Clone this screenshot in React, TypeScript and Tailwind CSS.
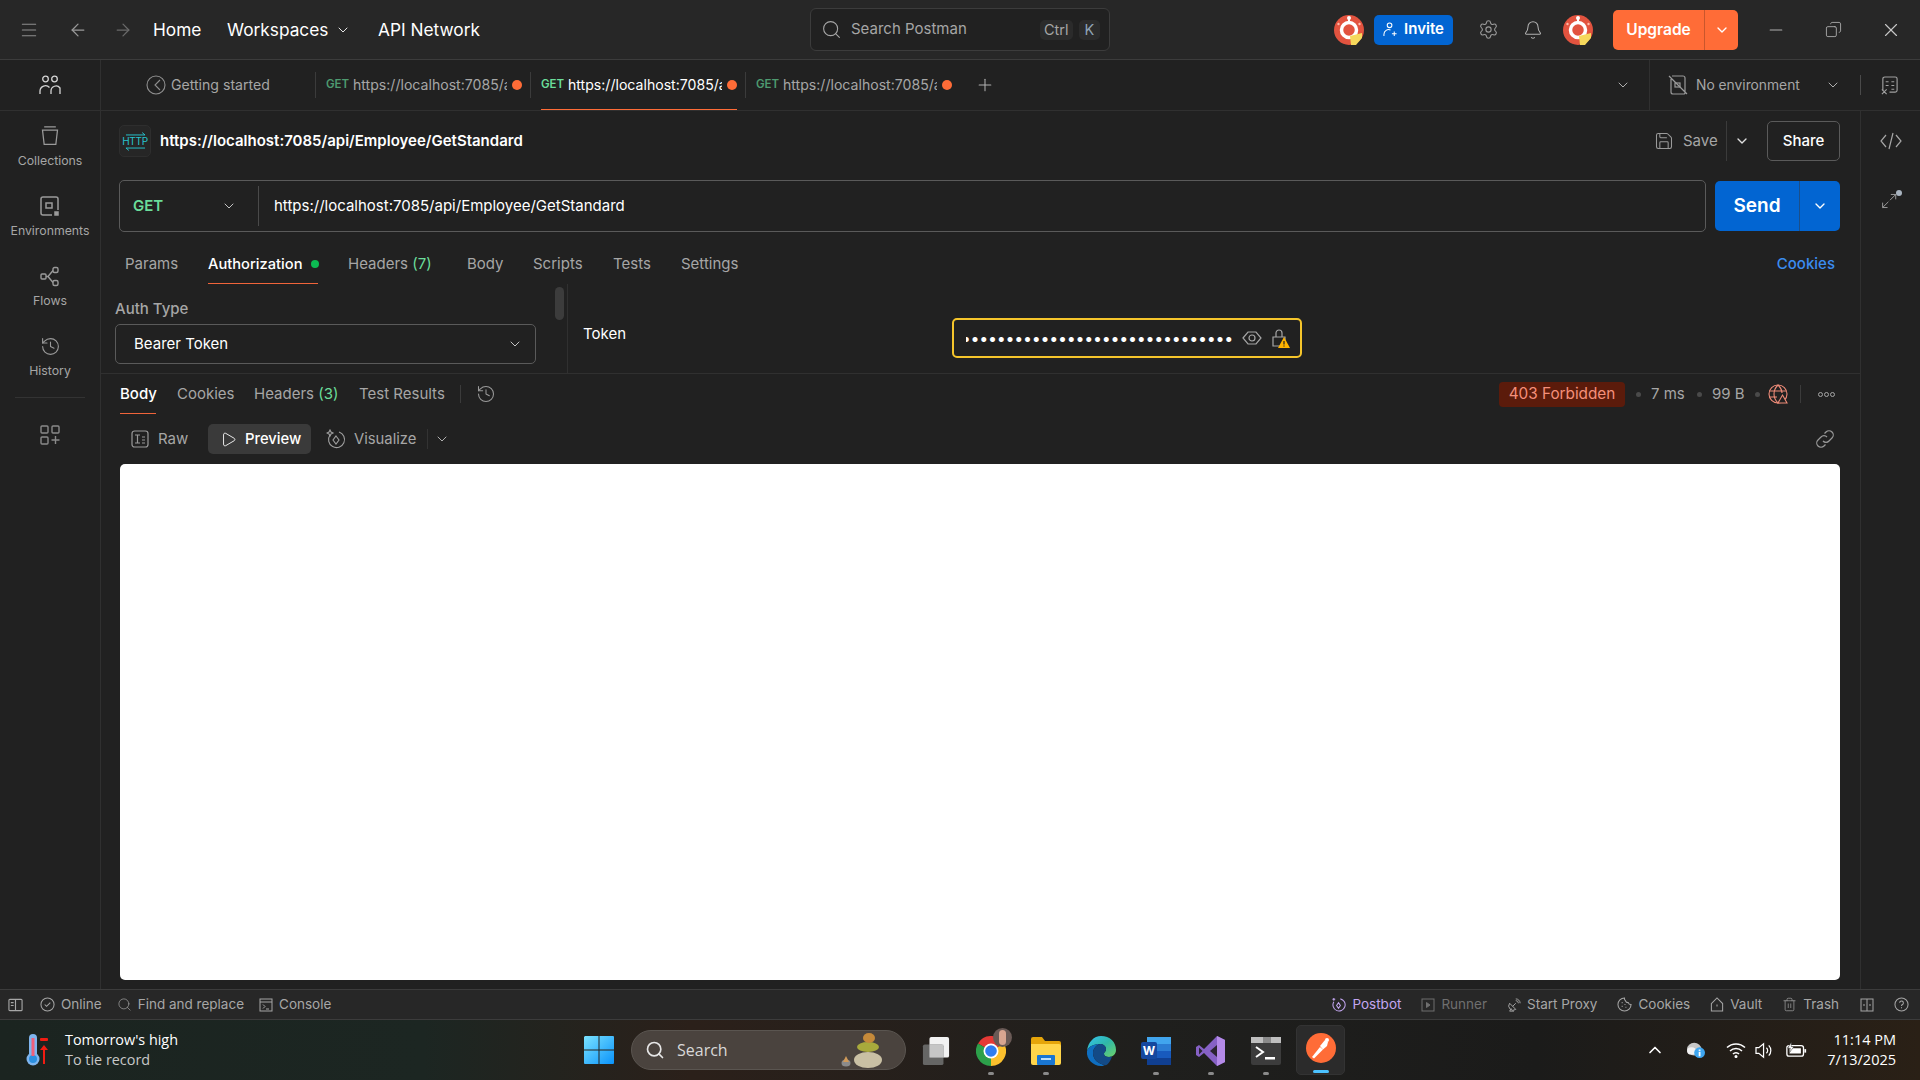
import {
  ArrowLeft,
  ArrowRight,
  Bell,
  ChevronDown,
  ChevronUp,
  Copy,
  History,
  Menu,
  Minus,
  Play,
  Plus,
  Save,
  Search,
  Settings,
  Trash2,
  X,
} from "lucide-react";

const Chev = ({ className = "text-[#c4c4c4]", size = 16 }: { className?: string; size?: number }) => (
  <ChevronDown size={size} strokeWidth={1.5} className={`shrink-0 ${className}`} />
);

const Avatar = ({ className = "" }: { className?: string }) => (
  <svg viewBox="0 0 30 30" className={`h-[30px] w-[30px] shrink-0 ${className}`}>
    <circle cx="15" cy="15" r="15" fill="#e2533f" />
    <circle cx="15" cy="3" r="2" fill="#fff" />
    <rect x="14" y="3" width="2" height="4" fill="#fff" />
    <circle cx="4.500" cy="9" r="1.200" fill="#ffb9a8" />
    <circle cx="25.500" cy="9" r="1.200" fill="#ffb9a8" />
    <circle cx="15" cy="15" r="7.500" fill="none" stroke="#fff" strokeWidth="3.500" />
    <path d="M16 21l12-3v5l-6 7h-5z" fill="#f6d85c" />
  </svg>
);

const PostmanLogo = () => (
  <svg viewBox="0 0 30 30" className="h-[30px] w-[30px]">
    <circle cx="15" cy="15" r="15" fill="#ff6c37" />
    <path d="M6 24l8-10 3 2.500-9 9z" fill="#fff" />
    <path d="M14 13l5-6 3 2-1 4-4 3.500z" fill="#fff" />
    <circle cx="21" cy="7" r="2" fill="#fff" />
  </svg>
);

const LeftIcon = ({ children, label }: { children: React.ReactNode; label: string }) => (
  <div className="flex h-[70px] w-full flex-col items-center pt-[2px] text-[#a6a6a6]">
    <div className="flex h-[26px] items-center text-[#9a9a9a]">{children}</div>
    <span className="mt-[3px] text-[12.3px] leading-[18px]">{label}</span>
  </div>
);

const Line = ({ className }: { className: string }) => <div className={`w-px shrink-0 bg-[#3b3b3b] ${className}`} />;

const Dot = () => <div className="size-[10px] shrink-0 rounded-full bg-[#ff6c37]" />;

const Tab = ({ active = false }: { active?: boolean }) => (
  <div className={`flex h-[50px] items-center ${active ? "border-b border-[#ff6c37]" : ""}`}>
    <span className={`w-[27px] shrink-0 text-[11.5px] font-semibold ${active ? "text-[#6bdd9a]" : "text-[#4e9a70]"}`}>GET</span>
    <span className={`w-[154px] shrink-0 overflow-hidden whitespace-nowrap text-[14.1px] ${active ? "text-white" : "text-[#a6a6a6]"}`}>
      https://localhost:7085/api/Employee/GetStandard
    </span>
    <span className="ml-[5px]">
      <Dot />
    </span>
  </div>
);

const TopBar = () => (
  <div className="flex h-[60px] shrink-0 items-center border-b border-[#3c3c3c] bg-[#272727]">
    <div className="flex w-[810px] items-center">
      <Menu size={20} strokeWidth={1.25} className="ml-[19px] text-[#8f8f8f]" />
      <ArrowLeft size={20} strokeWidth={1.5} className="ml-[29px] text-[#9a9a9a]" />
      <ArrowRight size={20} strokeWidth={1.5} className="ml-[25px] text-[#6a6a6a]" />
      <span className="ml-[20px] w-[49px] text-[17.3px] text-white">Home</span>
      <span className="ml-[25px] w-[101px] text-[17.3px] text-white">Workspaces</span>
      <Chev className="ml-[7px] text-[#e6e6e6]" />
      <span className="ml-[27px] text-[17.3px] text-white">API Network</span>
    </div>
    <div className="flex h-[43px] w-[300px] items-center rounded-md border border-[#3c3c3c] bg-[#212121]">
      <Search size={21} strokeWidth={1.25} className="ml-[10px] text-[#a6a6a6]" />
      <span className="ml-[9px] w-[189px] whitespace-nowrap text-[15px] text-[#a6a6a6]">Search Postman</span>
      <span className="rounded-[5px] bg-[#2b2b2b] px-[4px] py-[1px] text-[14.5px] leading-[18px] text-[#a6a6a6]">Ctrl</span>
      <span className="ml-[6px] rounded-[5px] bg-[#2b2b2b] px-[6px] py-[1px] text-[14.5px] leading-[18px] text-[#8fa3b5]">K</span>
    </div>
    <div className="flex flex-1 items-center">
      <Avatar className="ml-[224px]" />
      <div className="ml-[10px] flex h-[30px] w-[79px] items-center justify-center gap-[6px] rounded-[5px] bg-[#0265d2] text-[15px] font-semibold text-white">
        <svg viewBox="0 0 16 16" className="h-[15px] w-[15px]" fill="none" stroke="currentColor" strokeWidth="1.100">
          <circle cx="7" cy="3.500" r="2.500" />
          <path d="M1 15v-2a5 5 0 0 1 7-4.500M12 10v5M9.500 12.500h5" />
        </svg>
        Invite
      </div>
      <Settings size={21} strokeWidth={1.25} className="ml-[25px] text-[#9a9a9a]" />
      <Bell size={20} strokeWidth={1.25} className="ml-[24px] text-[#b0b0b0]" />
      <Avatar className="ml-[20px]" />
      <div className="ml-[20px] flex h-[40px] w-[125px] items-center rounded-[5px] bg-[#ff6c37] text-[15.5px] font-semibold text-white">
        <span className="w-[91px] text-center">Upgrade</span>
        <div className="flex h-full flex-1 items-center justify-center border-l border-[#c9562c]">
          <ChevronDown size={16} strokeWidth={2} />
        </div>
      </div>
      <Minus size={20} strokeWidth={1.25} className="ml-[28px] text-[#b0b0b0]" />
      <Copy size={17} strokeWidth={1.25} className="ml-[39px] -scale-x-100 text-[#b0b0b0]" />
      <X size={22} strokeWidth={1.25} className="ml-[38px] text-[#c8c8c8]" />
    </div>
  </div>
);

const Sidebar = () => (
  <div className="flex w-[101px] shrink-0 flex-col items-center border-r border-[#303030]">
    <div className="flex h-[51px] w-full items-center justify-center border-b border-[#303030] text-[#d4d4d4]">
      <svg viewBox="0 0 22 20" className="h-[20px] w-[22px]" fill="none" stroke="currentColor" strokeWidth="1.300">
        <circle cx="6.500" cy="4" r="2.800" />
        <circle cx="15.500" cy="4" r="2.800" />
        <path d="M1 19v-3a5.500 5.500 0 0 1 9.500-3.500M12 19v-3a5 5 0 0 1 9-3v6" />
      </svg>
    </div>
    <div className="flex w-full flex-col pt-[10px]">
      <LeftIcon label="Collections">
        <svg viewBox="0 0 20 24" className="h-[20px] w-[18px]" fill="none" stroke="currentColor" strokeWidth="1.500">
          <path d="M3 1h14M1 5h18l-2 17H3z" />
        </svg>
      </LeftIcon>
      <LeftIcon label="Environments">
        <svg viewBox="0 0 20 20" className="h-[20px] w-[20px]" fill="none" stroke="currentColor" strokeWidth="1.500">
          <path d="M12 19H3a2 2 0 0 1-2-2V3a2 2 0 0 1 2-2h13a2 2 0 0 1 2 2v11" />
          <rect x="6" y="7" width="6" height="5" />
          <rect x="15" y="16" width="3" height="3" fill="currentColor" />
        </svg>
      </LeftIcon>
      <LeftIcon label="Flows">
        <svg viewBox="0 0 20 20" className="h-[21px] w-[20px]" fill="none" stroke="currentColor" strokeWidth="1.400">
          <rect x="1" y="7.500" width="5" height="5" rx="1" />
          <rect x="13" y="1" width="5" height="5" rx="1.500" />
          <rect x="13" y="14" width="5" height="5" rx="1.500" />
          <path d="M6 10h2l5-6M8 10l5 6" />
        </svg>
      </LeftIcon>
      <LeftIcon label="History">
        <History size={21} strokeWidth={1.25} />
      </LeftIcon>
    </div>
    <div className="-mt-[4px] h-px w-[70px] bg-[#333333]" />
    <div className="mt-[27px] text-[#8a8a8a]">
      <svg viewBox="0 0 20 20" className="h-[20px] w-[20px]" fill="none" stroke="currentColor" strokeWidth="1.400">
        <rect x="1" y="1" width="7" height="7" rx="1" />
        <rect x="12" y="1" width="7" height="7" rx="1" />
        <rect x="1" y="12" width="7" height="7" rx="1" />
        <path d="M15.500 11v8M11.500 15h8" />
      </svg>
    </div>
  </div>
);

const TabRow = () => (
  <div className="flex h-[51px] shrink-0 items-center border-b border-[#303030]">
    <svg viewBox="0 0 20 20" className="ml-[45px] h-[20px] w-[20px] shrink-0 text-[#8f8f8f]" fill="none" stroke="currentColor" strokeWidth="1.100">
      <circle cx="10" cy="10" r="9" />
      <path d="M14 5l-5 5 5 5" />
    </svg>
    <span className="ml-[5px] w-[98px] shrink-0 whitespace-nowrap text-[14.1px] text-[#a6a6a6]">Getting started</span>
    <Line className="ml-[46px] h-[26px]" />
    <div className="ml-[10px]">
      <Tab />
    </div>
    <Line className="ml-[8px] h-[26px]" />
    <div className="ml-[10px]">
      <Tab active />
    </div>
    <Line className="ml-[8px] h-[26px]" />
    <div className="ml-[10px]">
      <Tab />
    </div>
    <Plus size={20} strokeWidth={1.25} className="ml-[23px] shrink-0 text-[#b0b0b0]" />
    <Chev className="ml-[620px] text-[#b0b0b0]" />
    <Line className="ml-[18px] h-[50px] bg-[#303030]" />
    <svg viewBox="0 0 20 20" className="ml-[18px] h-[20px] w-[20px] shrink-0 text-[#9a9a9a]" fill="none" stroke="currentColor" strokeWidth="1.200">
      <path d="M3 4v13a2 2 0 0 0 2 2h11a1.500 1.500 0 0 0 1-1V3a2 2 0 0 0-2-2H4M1 1l18 18" />
      <rect x="7" y="8" width="5" height="4" />
    </svg>
    <span className="ml-[8px] w-[104px] shrink-0 whitespace-nowrap text-[13.8px] text-[#a6a6a6]">No environment</span>
    <Chev className="ml-[25px] text-[#b0b0b0]" />
    <Line className="ml-[19px] h-[20px] bg-[#4a4a4a]" />
    <svg viewBox="0 0 20 20" className="ml-[19px] h-[19px] w-[19px] shrink-0 text-[#a0a0a0]" fill="none" stroke="currentColor" strokeWidth="1.200">
      <path d="M3 15V3a2 2 0 0 1 2-2h11a2 2 0 0 1 2 2v12a2 2 0 0 1-2 2h-6" />
      <path d="M6 6h3M12 6h3M6 10h3M12 10h3M12 14h3M2 14l5 5M7 14l-5 5" />
    </svg>
  </div>
);

const RequestHeader = () => (
  <div className="flex h-[69px] shrink-0 items-center pb-[9px] pl-[18px]">
    <div className="flex size-[32px] items-center justify-center rounded-[5px] border border-[#2e2e2e] bg-[#262626]">
      <div className="flex flex-col items-center text-[#28c4cf]">
        <svg viewBox="0 0 22 4" className="h-[4px] w-[21px]" fill="none" stroke="currentColor" strokeWidth="1">
          <path d="M1 3h20l-3-2.500" />
        </svg>
        <span className="text-[10px] leading-[11px] tracking-[-0.3px]">HTTP</span>
        <svg viewBox="0 0 22 4" className="h-[4px] w-[21px]" fill="none" stroke="currentColor" strokeWidth="1">
          <path d="M21 1H1l3 2.500" />
        </svg>
      </div>
    </div>
    <span className="ml-[9px] text-[15px] font-semibold text-white">https://localhost:7085/api/Employee/GetStandard</span>
    <div className="ml-auto flex items-center pr-[20px]">
      <Save size={20} strokeWidth={1.25} className="text-[#9a9a9a]" />
      <span className="ml-[9px] w-[35px] text-[15px] text-[#a6a6a6]">Save</span>
      <Line className="ml-[8px] h-[40px] bg-[#2a2a2a]" />
      <ChevronDown size={16} strokeWidth={2} className="ml-[7px] text-[#e0e0e0]" />
      <div className="ml-[17px] flex h-[40px] w-[73px] items-center justify-center rounded-[5px] border border-[#5a5a5a] text-[15px] font-medium text-white">
        Share
      </div>
    </div>
  </div>
);

const UrlBar = () => (
  <div className="flex h-[52px] shrink-0 pl-[18px] pr-[20px]">
    <div className="flex h-full flex-1 items-center rounded-[5px] border border-[#5a5a5a]">
      <span className="ml-[13px] w-[88px] text-[15px] font-semibold text-[#6bdd9a]">GET</span>
      <Chev className="text-[#c4c4c4]" />
      <Line className="ml-[21px] h-[40px] bg-[#4a4a4a]" />
      <span className="ml-[15px] text-[15px] text-white">https://localhost:7085/api/Employee/GetStandard</span>
    </div>
    <div className="ml-[9px] flex h-[50px] w-[125px] items-center self-center rounded-[5px] bg-[#0265d2] font-semibold text-white">
      <span className="w-[84px] text-center text-[19px]">Send</span>
      <div className="flex h-full flex-1 items-center justify-center border-l border-[#1b4f8a]">
        <ChevronDown size={16} strokeWidth={2} />
      </div>
    </div>
  </div>
);

const RequestTabs = () => (
  <div className="flex h-[52px] shrink-0 items-stretch whitespace-nowrap pl-[24px] pr-[25px] pt-[12px] text-[15px] text-[#a6a6a6]">
    <span className="flex w-[53px] items-center">Params</span>
    <div className="ml-[30px] flex w-[110px] items-center gap-[8px] border-b border-[#f0643a] pt-px text-[14.7px] font-medium text-white">
      Authorization
      <span className="size-[8px] shrink-0 rounded-full bg-[#0cbb52]" />
    </div>
    <span className="ml-[30px] flex w-[84px] items-center">
      Headers&nbsp;<span className="text-[#6bdd9a]">(7)</span>
    </span>
    <span className="ml-[35px] flex w-[36px] items-center">Body</span>
    <span className="ml-[30px] flex w-[49px] items-center">Scripts</span>
    <span className="ml-[31px] flex w-[38px] items-center">Tests</span>
    <span className="ml-[30px] flex w-[58px] items-center">Settings</span>
    <span className="ml-auto flex items-center font-medium text-[#3b8cf0]">Cookies</span>
  </div>
);

const AuthPanel = () => (
  <div className="flex h-[90px] shrink-0 border-b border-[#303030]">
    <div className="w-[454px] shrink-0 pl-[14px] pt-[16px]">
      <div className="text-[15px] font-medium leading-[18px] text-[#a6a6a6]">Auth Type</div>
      <div className="mt-[6px] flex h-[40px] w-[421px] items-center justify-between rounded-[5px] border border-[#5a5a5a] pl-[18px] pr-[12px] text-[15px] text-white">
        Bearer Token
        <Chev />
      </div>
    </div>
    <div className="mt-[3px] h-[33px] w-[9px] rounded-full bg-[#3c3c3c]" />
    <div className="ml-[3px] w-px bg-[#303030]" />
    <div className="flex flex-1 items-start pl-[15px]">
      <span className="mt-[39px] w-[369px] text-[15px] text-white">Token</span>
      <div className="mt-[34px] flex h-[40px] w-[350px] items-center rounded-[5px] border-2 border-[#f5c52b] pl-[12px]">
        <div className="flex w-[267px] justify-end overflow-hidden whitespace-nowrap text-[16px] leading-none tracking-[-0.25px] text-white">
          ••••••••••••••••••••••••••••••••••
        </div>
        <svg viewBox="0 0 20 14" className="ml-[9px] h-[14px] w-[20px] text-[#a6a6a6]" fill="none" stroke="currentColor" strokeWidth="1.200">
          <path d="M1 7l5-6h8l5 6-5 6H6z" />
          <circle cx="10" cy="7" r="3" />
        </svg>
        <div className="relative ml-[10px] h-[18px] w-[17px]">
          <svg viewBox="0 0 14 18" className="h-[18px] w-[14px] text-[#a6a6a6]" fill="none" stroke="currentColor" strokeWidth="1.200">
            <path d="M1 8h12v9H1zM4 8V4a3 3 0 0 1 6 0v4" />
          </svg>
          <svg viewBox="0 0 12 11" className="absolute -right-[1px] bottom-[-1px] h-[11px] w-[12px]">
            <path d="M6 0l6 11H0z" fill="#ffb400" />
            <path d="M6 4v3.500M6 8.600v1" stroke="#212121" strokeWidth="1.200" />
          </svg>
        </div>
      </div>
    </div>
  </div>
);

const ResponseTabs = () => (
  <div className="flex h-[40px] shrink-0 items-stretch whitespace-nowrap pl-[19px] pr-[25px] text-[15px] text-[#a6a6a6]">
    <div className="flex h-[40px] w-[36px] items-center border-b border-[#f0643a] pt-px font-medium text-white">Body</div>
    <span className="ml-[21px] flex w-[57px] items-center">Cookies</span>
    <span className="ml-[20px] flex w-[85px] items-center">
      Headers&nbsp;<span className="text-[#6bdd9a]">(3)</span>
    </span>
    <span className="ml-[20px] flex w-[86px] items-center">Test Results</span>
    <div className="ml-[15px] flex items-center">
      <Line className="h-[18px] bg-[#3b3b3b]" />
      <History size={20} strokeWidth={1.25} className="ml-[15px] text-[#9a9a9a]" />
    </div>
    <div className="ml-auto flex items-center">
      <span className="flex h-[25px] w-[126px] items-center justify-center rounded-[4px] bg-[#5b1b0b] text-[15.3px] text-[#f58f7a]">403 Forbidden</span>
      <span className="ml-[11px] size-[5px] rounded-full bg-[#4a4a4a]" />
      <span className="ml-[10px] w-[35px]">7 ms</span>
      <span className="ml-[11px] size-[5px] rounded-full bg-[#4a4a4a]" />
      <span className="ml-[10px] w-[34px]">99 B</span>
      <span className="ml-[9px] size-[5px] rounded-full bg-[#4a4a4a]" />
      <svg viewBox="0 0 20 20" className="ml-[8px] h-[20px] w-[20px] text-[#ee8b78]" fill="none" stroke="currentColor" strokeWidth="1.100">
        <circle cx="10" cy="10" r="9" />
        <path d="M10 1c-3 3-4 6-4 9s1 6 4 9M10 1c3 3 4 5 4 8M1 7h17M1 13h8" />
        <path d="M14.500 11l4.500 8h-9z" fill="#212121" />
      </svg>
      <Line className="ml-[12px] h-[18px] bg-[#3b3b3b]" />
      <div className="ml-[17px] flex gap-[1px]">
        <span className="size-[5px] rounded-full border border-[#a6a6a6]" />
        <span className="size-[5px] rounded-full border border-[#a6a6a6]" />
        <span className="size-[5px] rounded-full border border-[#a6a6a6]" />
      </div>
    </div>
  </div>
);

const ViewRow = () => (
  <div className="flex h-[50px] shrink-0 items-center pl-[19px] pr-[25px] text-[15px] text-[#a6a6a6]">
    <svg viewBox="0 0 18 18" className="ml-[11px] h-[18px] w-[18px] text-[#9a9a9a]" fill="none" stroke="currentColor" strokeWidth="1.200">
      <rect x="1" y="1" width="16" height="16" rx="2.500" />
      <path d="M4 5h5M6.500 5v8M4 13h5M11 7h3M11 10h3M11 13h3" />
    </svg>
    <span className="ml-[9px] w-[36px]">Raw</span>
    <div className="ml-[14px] flex h-[30px] w-[103px] items-center rounded-[5px] bg-[#3a3a3a] text-[14.8px] font-medium text-white">
      <Play size={17} strokeWidth={1.25} className="ml-[12px]" />
      <span className="ml-[8px]">Preview</span>
    </div>
    <svg viewBox="0 0 20 20" className="ml-[15px] h-[20px] w-[20px] text-[#a0a0a0]" fill="none" stroke="currentColor" strokeWidth="1.100">
      <path d="M13 3a8 8 0 1 1-9 3" />
      <path d="M10 7l3 4-3 4-3-4zM4 1l1 2 2 1-2 1-1 2-1-2-2-1 2-1z" />
    </svg>
    <span className="ml-[8px] w-[62px] text-[14.8px]">Visualize</span>
    <Line className="ml-[11px] h-[20px] bg-[#333333]" />
    <Chev className="ml-[6px] text-[#b0b0b0]" />
    <svg viewBox="0 0 20 20" className="ml-auto h-[20px] w-[20px] text-[#9a9a9a]" fill="none" stroke="currentColor" strokeWidth="1.200">
      <path d="M8 12a4 4 0 0 0 6 0l3-3a4 4 0 0 0-6-6l-1.500 1.500" />
      <path d="M12 8a4 4 0 0 0-6 0l-3 3a4 4 0 0 0 6 6l1.500-1.500" />
    </svg>
  </div>
);

const RightRail = () => (
  <div className="flex w-[60px] shrink-0 flex-col items-center border-l border-[#303030] pt-[21px] text-[#a6a6a6]">
    <svg viewBox="0 0 22 18" className="h-[18px] w-[22px]" fill="none" stroke="currentColor" strokeWidth="1.200">
      <path d="M6 3L1 9l5 6M16 3l5 6-5 6M13 1L9 17" />
    </svg>
    <div className="relative ml-[2px] mt-[41px] h-[20px] w-[22px]">
      <svg viewBox="0 0 22 20" className="h-[20px] w-[18px]" fill="none" stroke="currentColor" strokeWidth="1.100">
        <path d="M11 9l7-7M12 2h6v6M9 11l-7 7M2 12v6h6" />
      </svg>
      <span className="absolute right-[1px] -top-[1px] size-[6px] rounded-full bg-[#a9b4c0]" />
    </div>
  </div>
);

const StatusItem = ({ icon, label, className = "" }: { icon: React.ReactNode; label: string; className?: string }) => (
  <div className={`flex items-center gap-[6px] whitespace-nowrap ${className}`}>
    {icon}
    <span>{label}</span>
  </div>
);

const StatusBar = () => (
  <div className="flex h-[31px] shrink-0 items-center border-y border-[#3c3c3c] bg-[#272727] text-[13.5px] text-[#a6a6a6]">
    <svg viewBox="0 0 16 14" className="ml-[8px] h-[14px] w-[15px]" fill="none" stroke="currentColor" strokeWidth="1.200">
      <rect x="1" y="1" width="14" height="12" rx="1" />
      <path d="M8 1v12M3 4.500h3M3 7.500h3" />
    </svg>
    <StatusItem
      className="ml-[17px]"
      label="Online"
      icon={
        <svg viewBox="0 0 16 16" className="h-[15px] w-[15px]" fill="none" stroke="currentColor" strokeWidth="1.100">
          <circle cx="8" cy="8" r="7" />
          <path d="M5 8l2 2 4-4" />
        </svg>
      }
    />
    <StatusItem className="ml-[15px]" label="Find and replace" icon={<Search size={15} strokeWidth={1.1} />} />
    <StatusItem
      className="ml-[15px]"
      label="Console"
      icon={
        <svg viewBox="0 0 14 14" className="h-[14px] w-[14px]" fill="none" stroke="currentColor" strokeWidth="1">
          <rect x="1" y="1" width="12" height="12" />
          <path d="M1 4h12M4 6.500l2 2-2 2M7 11h3" />
        </svg>
      }
    />
    <div className="ml-auto flex items-center">
      <StatusItem
        className="text-[#c3a6f0]"
        label="Postbot"
        icon={
          <svg viewBox="0 0 16 16" className="h-[15px] w-[15px]" fill="none" stroke="currentColor" strokeWidth="1.100">
            <path d="M10 2a6.500 6.500 0 1 1-7 3" />
            <path d="M8 6l2 3-2 3-2-3zM3 1v3M1.500 2.500h3" />
          </svg>
        }
      />
      <StatusItem
        className="ml-[20px] text-[#6f6f6f]"
        label="Runner"
        icon={
          <svg viewBox="0 0 14 14" className="h-[14px] w-[14px]" fill="none" stroke="currentColor" strokeWidth="1">
            <rect x="1" y="1" width="12" height="12" />
            <path d="M5.500 4.500l3.500 2.500-3.500 2.500z" fill="currentColor" />
          </svg>
        }
      />
      <StatusItem
        className="ml-[20px]"
        label="Start Proxy"
        icon={
          <svg viewBox="0 0 16 16" className="h-[14px] w-[14px]" fill="none" stroke="currentColor" strokeWidth="1.100">
            <path d="M3 6a5 5 0 0 0 7 7zM6.500 9.500L10 6M10 3a3 3 0 0 1 3 3M10 1a5 5 0 0 1 5 5M5 12l-2 3h5" />
          </svg>
        }
      />
      <StatusItem
        className="ml-[20px]"
        label="Cookies"
        icon={
          <svg viewBox="0 0 16 16" className="h-[15px] w-[15px]" fill="none" stroke="currentColor" strokeWidth="1.100">
            <path d="M8 1a7 7 0 1 0 7 7 3 3 0 0 1-3-2 3 3 0 0 1-3-2 3 3 0 0 1-1-3z" />
            <path d="M5 6h1M5 10h1M9 11h1M8 8h1" />
          </svg>
        }
      />
      <StatusItem
        className="ml-[20px]"
        label="Vault"
        icon={
          <svg viewBox="0 0 14 16" className="h-[15px] w-[14px]" fill="none" stroke="currentColor" strokeWidth="1.100">
            <path d="M1 7l6-6 6 6v8H1zM7 8v2" />
          </svg>
        }
      />
      <StatusItem className="ml-[20px]" label="Trash" icon={<Trash2 size={15} strokeWidth={1.1} />} />
      <svg viewBox="0 0 14 14" className="ml-[21px] h-[14px] w-[14px]" fill="none" stroke="currentColor" strokeWidth="1">
        <rect x="1" y="1" width="12" height="12" />
        <path d="M7 1v12M3 7h2M9 7h2" />
      </svg>
      <svg viewBox="0 0 16 16" className="ml-[20px] mr-[11px] h-[15px] w-[15px]" fill="none" stroke="currentColor" strokeWidth="1.100">
        <circle cx="8" cy="8" r="7" />
        <path d="M6 6.200a2 2 0 1 1 3 1.800c-.7.4-1 .8-1 1.500M8 11v1" />
      </svg>
    </div>
  </div>
);

const Pip = ({ active = false }: { active?: boolean }) => (
  <div className={`mt-[1px] h-[3px] rounded-full ${active ? "w-[16px] bg-[#4cc2ff]" : "w-[6px] bg-[#8a8a8a]"}`} />
);

const TaskApp = ({ children, pip = true, className = "" }: { children: React.ReactNode; pip?: boolean; className?: string }) => (
  <div className={`flex h-[50px] w-[55px] flex-col items-center justify-end ${className}`}>
    <div className="flex h-[36px] items-center">{children}</div>
    <div className="mt-[2px] h-[4px]">{pip && <Pip />}</div>
  </div>
);

const Taskbar = () => (
  <div className="flex h-[60px] shrink-0 items-center bg-[linear-gradient(90deg,#1b2420,#1c2622_22%,#2b201a_36%,#1f1f1d_60%,#1b1b1a_80%,#2a2016)] font-['Open_Sans',sans-serif] text-white">
    <svg viewBox="0 0 24 36" className="ml-[26px] h-[36px] w-[24px]">
      <rect x="3" y="2" width="8" height="30" rx="4" fill="#7fb5ee" />
      <circle cx="7" cy="27" r="6.500" fill="#7fb5ee" />
      <circle cx="7" cy="27" r="4" fill="#2b8fe0" />
      <rect x="5.500" y="6" width="3" height="18" fill="#f0607a" />
      <rect x="14" y="6" width="8" height="3" rx="1" fill="#f01c12" />
      <path d="M18 13l4 5h-3v14h-2V18h-3z" fill="#f01c12" />
    </svg>
    <div className="ml-[15px] w-[150px] text-[14.4px] leading-[20px]">
      <div>Tomorrow's high</div>
      <div className="text-[#c8c8c8]">To tie record</div>
    </div>
    <svg viewBox="0 0 30 30" className="ml-[369px] h-[30px] w-[30px]">
      <defs>
        <linearGradient id="win" x1="0" y1="0" x2="1" y2="1">
          <stop offset="0" stopColor="#7be3ff" />
          <stop offset="1" stopColor="#0a93fb" />
        </linearGradient>
      </defs>
      <path d="M1 1h13.500v13.500H0V2zM15.500 1H29a1 1 0 0 1 1 1v12.500H15.500zM0 15.500h14.500V29H1a1 1 0 0 1-1-1zM15.500 15.500H30V28a1 1 0 0 1-1 1H15.500z" fill="url(#win)" />
    </svg>
    <div className="ml-[17px] flex h-[40px] w-[275px] items-center rounded-full border border-[#5a5550] bg-[#4a433e]">
      <Search size={20} strokeWidth={2} className="ml-[13px] text-[#e6e6e6]" />
      <span className="ml-[12px] text-[16px] text-[#d8d8d8]">Search</span>
      <svg viewBox="0 0 44 36" className="ml-auto mr-[21px] h-[36px] w-[44px]">
        <ellipse cx="6" cy="31" rx="4.500" ry="3.500" fill="#8b8b8b" />
        <path d="M6 24l3 6H3z" fill="#d09a5a" />
        <ellipse cx="28" cy="28" rx="14" ry="8" fill="#c9c0a4" />
        <ellipse cx="28" cy="15" rx="11" ry="5" fill="#a8aa3c" />
        <ellipse cx="29" cy="6" rx="6" ry="5" fill="#c58a3a" />
      </svg>
    </div>
    <div className="ml-[1px] flex items-center">
      <TaskApp pip={false} className="ml-[1px]">
        <svg viewBox="0 0 30 32" className="h-[30px] w-[28px]">
          <rect x="8" y="1" width="21" height="22" rx="2" fill="#f2f2f2" />
          <rect x="1" y="9" width="22" height="22" rx="2" fill="#6e6e6e" fillOpacity="0.9" />
          <rect x="8" y="9" width="15" height="14" fill="#c6c6c6" />
        </svg>
      </TaskApp>
      <TaskApp>
        <div className="relative h-[30px] w-[30px]">
          <svg viewBox="0 0 30 30" className="h-[30px] w-[30px]">
            <path d="M2 7.500A15 15 0 0 1 28 7.500L15 15z" fill="#e53935" />
            <path d="M2 7.500A15 15 0 0 0 15 30L15 15z" fill="#2ca04a" />
            <path d="M28 7.500A15 15 0 0 1 15 30L15 15z" fill="#fbc02d" />
            <circle cx="15" cy="15" r="7.500" fill="#fff" />
            <circle cx="15" cy="15" r="5.800" fill="#2f7df0" />
          </svg>
          <div className="absolute -right-[6px] -top-[8px] size-[19px] rounded-full bg-[#6a5a56]">
            <div className="ml-[6px] mt-[2px] h-[15px] w-[7px] rounded-full bg-[#d8a590]" />
          </div>
        </div>
      </TaskApp>
      <TaskApp>
        <svg viewBox="0 0 30 28" className="h-[28px] w-[30px]">
          <path d="M0 2a2 2 0 0 1 2-2h9l3 4h14a2 2 0 0 1 2 2v4H0z" fill="#e5a50a" />
          <path d="M0 7h28a2 2 0 0 1 2 2v17a2 2 0 0 1-2 2H2a2 2 0 0 1-2-2z" fill="#ffd54a" />
          <rect x="6" y="18" width="18" height="10" rx="1" fill="#1976d2" />
          <rect x="10" y="21" width="10" height="2" fill="#bbdefb" />
        </svg>
      </TaskApp>
      <TaskApp pip={false}>
        <svg viewBox="0 0 30 30" className="h-[30px] w-[30px]">
          <defs>
            <linearGradient id="edge" x1="0" y1="0" x2="1" y2="1">
              <stop offset="0" stopColor="#35c1f1" />
              <stop offset="0.5" stopColor="#2fb8a8" />
              <stop offset="1" stopColor="#6ed16a" />
            </linearGradient>
          </defs>
          <path d="M1 15C2 6 8 0 15 0c9 0 15 6 15 14 0 4-3 7-7 7-3 0-5-1-5-3 0-2 2-2 2-5 0-3-3-5-6-5C8 8 3 10 1 15z" fill="url(#edge)" />
          <path d="M1 15c2-5 7-7 13-7-4 1-7 5-7 9 0 6 5 11 12 12-2 1-3 1-4 1C7 30 0 23 1 15z" fill="#0f6ec0" />
          <path d="M7 17c0-4 3-8 7-9 3 0 6 2 6 5 0 3-2 3-2 5 0 2 2 3 5 3l3-.5C24 27 20 30 19 29 12 28 7 23 7 17z" fill="#134a86" />
        </svg>
      </TaskApp>
      <TaskApp>
        <svg viewBox="0 0 30 30" className="h-[30px] w-[30px]">
          <rect x="6" y="1" width="24" height="28" rx="2" fill="#2b7cd3" />
          <rect x="6" y="1" width="24" height="7" fill="#41a5ee" />
          <rect x="6" y="15" width="24" height="7" fill="#185abd" />
          <rect x="6" y="22" width="24" height="7" fill="#103f91" />
          <rect x="0" y="6" width="16" height="17" rx="2" fill="#15489f" />
          <text x="8" y="19" textAnchor="middle" fontSize="12" fontWeight="700" fill="#fff" fontFamily="Inter">W</text>
        </svg>
      </TaskApp>
      <TaskApp>
        <svg viewBox="0 0 30 32" className="h-[32px] w-[30px]">
          <path d="M21 1l8 4v22l-8 4-13-13-5 4-3-2V12l3-2 5 4z" fill="#8661c5" />
          <path d="M21 1l8 4v22l-8 4z" fill="#b48ae8" />
          <path d="M21 10l-7 6 7 6z" fill="#2a2430" />
          <path d="M3 12.500v7l3.500-3.500z" fill="#2a2430" />
        </svg>
      </TaskApp>
      <TaskApp>
        <svg viewBox="0 0 30 28" className="h-[28px] w-[30px]">
          <rect width="30" height="28" rx="2" fill="#3c3c3c" />
          <rect width="30" height="6" fill="#bfbfbf" />
          <rect x="12" width="8" height="6" fill="#8a8a8a" />
          <path d="M5 10l7 5-7 5" fill="none" stroke="#fff" strokeWidth="2" />
          <rect x="14" y="20" width="10" height="2.500" fill="#fff" />
        </svg>
      </TaskApp>
      <div className="ml-[3px] flex h-[50px] w-[49px] flex-col items-center justify-end rounded-[5px] border border-[#333333] bg-[#2b2b2b]">
        <div className="flex h-[36px] items-center">
          <PostmanLogo />
        </div>
        <div className="mt-[3px] mb-[1px]">
          <Pip active />
        </div>
      </div>
    </div>
    <ChevronUp size={20} strokeWidth={2} className="ml-[300px] text-white" />
    <svg viewBox="0 0 22 20" className="ml-[21px] h-[18px] w-[20px]">
      <ellipse cx="9" cy="9" rx="8" ry="7" fill="#c8c8c8" />
      <ellipse cx="6" cy="11" rx="5" ry="4" fill="#f2f2f2" />
      <circle cx="15" cy="13" r="6" fill="#3ea6f0" />
      <rect x="14" y="12" width="2" height="5" fill="#fff" />
      <rect x="14" y="9.500" width="2" height="1.500" fill="#fff" />
    </svg>
    <svg viewBox="0 0 20 16" className="ml-[20px] h-[16px] w-[20px]" fill="none" stroke="#fff" strokeWidth="1.500">
      <path d="M1 5.500a13 13 0 0 1 18 0M4 9a8.500 8.500 0 0 1 12 0M7 12a4 4 0 0 1 6 0" />
      <circle cx="10" cy="14.500" r="0.800" fill="#fff" />
    </svg>
    <svg viewBox="0 0 20 18" className="ml-[9px] h-[17px] w-[19px]" fill="none" stroke="#fff" strokeWidth="1.300">
      <path d="M1 6v6h3l5 4V2L4 6zM12 6a4 4 0 0 1 0 6M14.500 3.500a8 8 0 0 1 0 11" />
    </svg>
    <svg viewBox="0 0 24 18" className="ml-[12px] h-[18px] w-[21px]">
      <rect x="1" y="4" width="19" height="12" rx="2.500" fill="none" stroke="#fff" strokeWidth="1.500" />
      <rect x="4" y="7" width="13" height="6" fill="#fff" />
      <rect x="21" y="8" width="2" height="4" fill="#fff" />
      <path d="M6 0L2 7h3l-1 5 5-7H6z" fill="#fff" stroke="#1c1c1b" strokeWidth="0.500" />
    </svg>
    <div className="ml-auto mr-[24px] whitespace-nowrap text-right text-[14.5px] leading-[20px]">
      <div>11:14 PM</div>
      <div>7/13/2025</div>
    </div>
  </div>
);

export default function App() {
  return (
    <div className="flex h-[1080px] w-[1920px] flex-col overflow-hidden bg-[#212121] font-['Inter',sans-serif]">
      <TopBar />
      <div className="flex min-h-0 flex-1">
        <Sidebar />
        <div className="flex min-w-0 flex-1 flex-col">
          <TabRow />
          <div className="flex min-h-0 flex-1">
            <div className="flex min-w-0 flex-1 flex-col">
              <RequestHeader />
              <UrlBar />
              <RequestTabs />
              <AuthPanel />
              <ResponseTabs />
              <ViewRow />
              <div className="mb-[9px] ml-[19px] mr-[20px] min-h-0 flex-1 rounded-[5px] bg-white" />
            </div>
            <RightRail />
          </div>
        </div>
      </div>
      <StatusBar />
      <Taskbar />
    </div>
  );
}
